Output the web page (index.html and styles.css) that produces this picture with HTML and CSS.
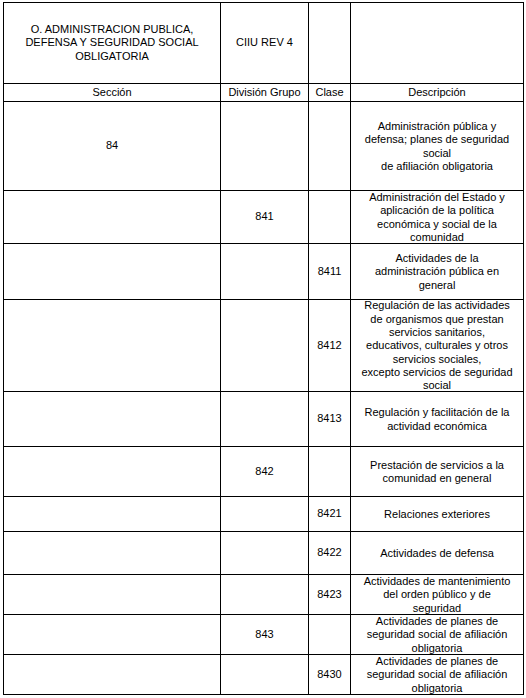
FILE: index.html
```html
<!DOCTYPE html>
<html lang="es">
<head>
<meta charset="utf-8">
<title>CIIU REV 4 - Sección O</title>
<link rel="stylesheet" href="styles.css">
</head>
<body>
<table class="ciiu">
  <colgroup>
    <col class="c-sec">
    <col class="c-div">
    <col class="c-cla">
    <col class="c-des">
  </colgroup>
  <thead>
    <tr class="r-title">
      <th>O. ADMINISTRACION PUBLICA,<br>DEFENSA Y SEGURIDAD SOCIAL<br>OBLIGATORIA</th>
      <th>CIIU REV 4</th>
      <th></th>
      <th></th>
    </tr>
    <tr class="r-head">
      <th>Sección</th>
      <th>División Grupo</th>
      <th>Clase</th>
      <th>Descripción</th>
    </tr>
  </thead>
  <tbody>
    <tr class="h89">
      <td>84</td><td></td><td></td>
      <td class="desc"><span class="txt">Administración pública y defensa; planes de seguridad social<br>de afiliación obligatoria</span></td>
    </tr>
    <tr class="h53">
      <td></td><td>841</td><td></td>
      <td class="desc"><span class="txt">Administración del Estado y aplicación de la política económica y social de la comunidad</span></td>
    </tr>
    <tr class="h56">
      <td></td><td></td><td>8411</td>
      <td class="desc"><span class="txt">Actividades de la<br>administración pública en general</span></td>
    </tr>
    <tr class="h92">
      <td></td><td></td><td>8412</td>
      <td class="desc"><span class="txt">Regulación de las actividades de organismos que prestan servicios sanitarios,<br>educativos, culturales y otros servicios sociales,<br>excepto servicios de seguridad social</span></td>
    </tr>
    <tr class="h55">
      <td></td><td></td><td>8413</td>
      <td class="desc"><span class="txt">Regulación y facilitación de la actividad económica</span></td>
    </tr>
    <tr class="h50">
      <td></td><td>842</td><td></td>
      <td class="desc"><span class="txt">Prestación de servicios a la comunidad en general</span></td>
    </tr>
    <tr class="h35">
      <td></td><td></td><td>8421</td>
      <td class="desc"><span class="txt">Relaciones exteriores</span></td>
    </tr>
    <tr class="h43">
      <td></td><td></td><td>8422</td>
      <td class="desc"><span class="txt">Actividades de defensa</span></td>
    </tr>
    <tr class="h40">
      <td></td><td></td><td>8423</td>
      <td class="desc"><span class="txt">Actividades de mantenimiento del orden público y de seguridad</span></td>
    </tr>
    <tr class="h40">
      <td></td><td>843</td><td></td>
      <td class="desc"><span class="txt">Actividades de planes de seguridad social de afiliación obligatoria</span></td>
    </tr>
    <tr class="h40">
      <td></td><td></td><td>8430</td>
      <td class="desc"><span class="txt">Actividades de planes de seguridad social de afiliación obligatoria</span></td>
    </tr>
  </tbody>
</table>
</body>
</html>
```
FILE: styles.css
```css
html, body {
  margin: 0;
  padding: 0;
  background: #ffffff;
}

body {
  padding: 2px 0 0 3px;
  font-family: "Liberation Sans", Arial, sans-serif;
  font-size: 11px;
  line-height: 13.33px;
  color: #000;
}

.ciiu {
  border-collapse: collapse;
  table-layout: fixed;
  width: 520px;
}

.c-sec { width: 217px; }
.c-div { width: 88px; }
.c-cla { width: 42px; }
.c-des { width: 173px; }

.ciiu th,
.ciiu td {
  border: 1px solid #000;
  padding: 0 2px;
  text-align: center;
  vertical-align: middle;
  font-weight: normal;
}

.ciiu td.desc {
  padding: 0 8px;
}

.txt {
  display: block;
  margin: -3px 0 -4px;
}

.r-title { height: 81px; }
.r-head { height: 18px; }

.h89 { height: 89px; }
.h53 { height: 53px; }
.h56 { height: 56px; }
.h92 { height: 92px; }
.h55 { height: 55px; }
.h50 { height: 50px; }
.h35 { height: 35px; }
.h43 { height: 43px; }
.h40 { height: 40px; }
```
